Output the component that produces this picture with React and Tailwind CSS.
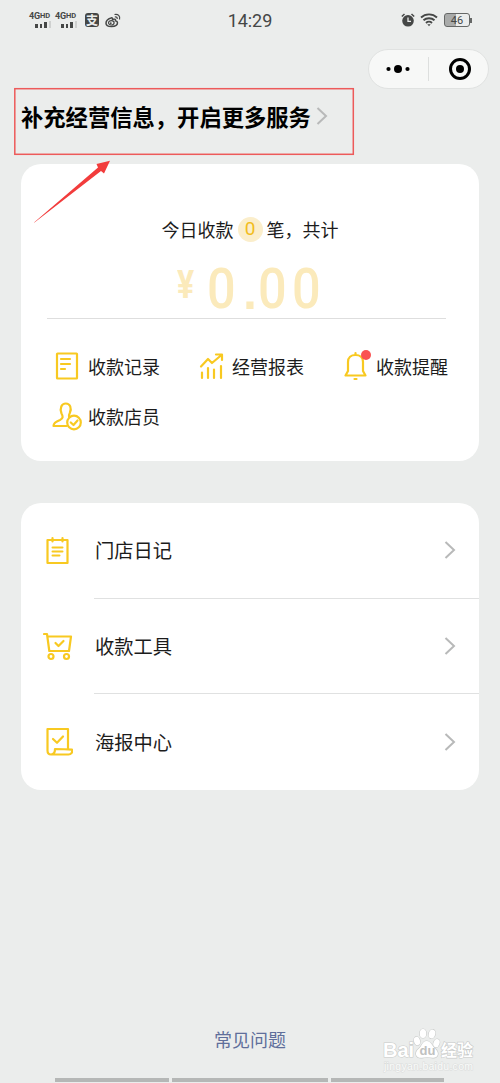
import React from 'react';

const stroke = {
  fill: 'none',
  stroke: '#f8c921',
  strokeWidth: 2.2,
  strokeLinecap: 'round',
  strokeLinejoin: 'round',
};

function RecordIcon() {
  return (
    <svg width="30" height="30" viewBox="0 0 30 30" {...stroke}>
      <rect x="5" y="2.5" width="20" height="25" rx="0.5" />
      <path d="M9 8h9M9 13h9M9 18h4" />
    </svg>
  );
}

function ReportIcon() {
  return (
    <svg width="30" height="30" viewBox="0 0 30 30" {...stroke}>
      <path d="M5 15.500L12 8L16 12L25.500 4M20 3.500H26V9" />
      <path d="M6 21.500V27M12 17V27M18 18.500V27M25 15V27" />
    </svg>
  );
}

function BellIcon() {
  return (
    <svg width="30" height="30" viewBox="0 0 30 30" {...stroke}>
      <path d="M5.500 24.500H25.500L23 20V11C23 6.500 20 4 15.500 4S8 6.500 8 11V20Z" />
      <path d="M15.500 3V2M14.500 28h2" />
    </svg>
  );
}

function StaffIcon() {
  return (
    <svg width="32" height="30" viewBox="0 0 32 30" {...stroke}>
      <path d="M14.500 25H1.500C1.500 22 4 20.500 8 19C11.500 17.500 11 15 9.500 12.500C7.500 7 9.500 2.500 13.800 2.500S20 7 17.800 12C16.800 14 16.500 15 17 16" />
      <circle cx="22" cy="21.500" r="6.800" />
      <path d="M18.800 21.500L21.500 24L25.500 19.500" />
    </svg>
  );
}

function DiaryIcon() {
  return (
    <svg width="30" height="30" viewBox="0 0 30 30" {...stroke}>
      <path d="M4.500 4H24.500V27H4.500Z" />
      <path d="M9.500 2V5.500M19.500 2V5.500" />
      <path d="M9.500 11.500H19.500M9.500 15.500H19.500M9.500 19.500H16.500" strokeWidth="2" />
    </svg>
  );
}

function CartIcon() {
  return (
    <svg width="30" height="30" viewBox="0 0 30 30" {...stroke}>
      <path d="M1 2H4L6.300 19H26L28 4.500H5" />
      <path d="M12.500 11L15.500 14L20.500 9" />
      <circle cx="8" cy="24.500" r="2.500" />
      <circle cx="23.500" cy="24.500" r="2.500" />
    </svg>
  );
}

function PosterIcon() {
  return (
    <svg width="30" height="30" viewBox="0 0 30 30" {...stroke}>
      <path d="M25 21.500V2H4.500V23.500C4.500 26 6 27.500 8 27.500H25.500C28 27.500 29.800 25.500 29 22.700C22 22 18 22 12 22C12 25 11 27.500 8 27.500" />
      <path d="M10 12L14 15.800L20 9.500" />
    </svg>
  );
}

function Chevron({ className }) {
  return (
    <svg className={className} width="12" height="18" viewBox="0 0 12 18" fill="none" stroke="#b8b9b9" strokeWidth="2">
      <path d="M1.500 1L10 9L1.500 17" />
    </svg>
  );
}

function Signal() {
  return (
    <div className="flex w-[22px] flex-col">
      <div className="flex h-[9px] items-start font-bold leading-none">
        <span className="text-[9px] leading-[9px] tracking-[-0.2px]">4G</span>
        <span className="text-[7.500px] leading-[7px]">HD</span>
      </div>
      <div className="ml-[6px] mt-px flex h-[6px] items-end gap-[2px]">
        <i className="h-[4px] w-[2.500px] bg-[#454746]" />
        <i className="h-[4.500px] w-[2.500px] bg-[#454746]" />
        <i className="h-[6px] w-[2.500px] bg-[#454746]" />
        <i className="h-[7px] w-[2.500px] bg-[#cfd1d0]" />
      </div>
    </div>
  );
}

function StatusBar() {
  return (
    <div className="grid h-10 grid-cols-3 items-center font-[Roboto,sans-serif] text-[#454746]">
      <div className="flex items-center pl-[29px]">
        <Signal />
        <div className="w-[4px]" />
        <Signal />
        <div className="ml-[8px] flex size-[14px] items-center justify-center rounded-[3px] bg-[#454746] font-['Noto_Sans_CJK_SC',sans-serif] text-[12px] font-bold leading-none text-[#ebedec]">
          支
        </div>
        <svg className="ml-[6px]" width="16" height="15" viewBox="0 0 16 15" fill="none" stroke="#454746">
          <path d="M6 5C3 6 1 8 1 10.200C1 12.500 3.500 13.500 6.500 13.500C10 13.500 12.500 12 12.500 9.800C12.500 8.500 11.500 8 10.500 7.800C10.800 6 9.500 5.800 7.500 6.500C7.700 5 7.200 4.500 6 5Z" strokeWidth="1.500" />
          <ellipse cx="6.300" cy="9.800" rx="2.800" ry="2.200" strokeWidth="1.200" />
          <circle cx="5.800" cy="10.200" r="0.900" fill="#454746" stroke="none" />
          <path d="M9.500 1.500C13 .7 15.500 3 14.500 6.500M9.800 4C11.500 3.600 12.500 4.500 12.200 6" strokeWidth="1.200" />
        </svg>
      </div>
      <div className="text-center text-[18px] tracking-[-0.1px]">14:29</div>
      <div className="flex items-center justify-end pr-[28px]">
        <svg width="14" height="14" viewBox="0 0 14 14">
          <circle cx="7" cy="7.800" r="5.800" fill="#454746" />
          <path d="M.8 3.500L3.500 1M13.200 3.500L10.500 1" stroke="#454746" strokeWidth="1.500" />
          <path d="M7 4.500V8.300H10" fill="none" stroke="#ebedec" strokeWidth="1.300" />
        </svg>
        <svg className="ml-[5px]" width="18" height="14" viewBox="0 0 18 14" fill="none" stroke="#454746" strokeWidth="1.900">
          <path d="M1 4.500C5.500 .3 12.500 .3 17 4.500M3.500 7.300C6.500 4.500 11.500 4.500 14.500 7.300M6 10C7.700 8.400 10.300 8.400 12 10" />
          <path d="M7.300 11.300H10.700L9 13.200Z" fill="#454746" stroke="none" />
        </svg>
        <div className="ml-[6px] flex h-[14px] w-[26px] items-center justify-center rounded-[3px] border-[1.500px] border-[#666867] bg-linear-to-r from-[#a9abaa] from-46% to-[#ebedec] to-46% text-[11px] leading-none">
          46
        </div>
        <div className="h-[5px] w-[2px] bg-[#666867]" />
      </div>
    </div>
  );
}

function Capsule() {
  return (
    <div className="ml-[368px] mt-[9px] flex h-10 w-[121px] items-center rounded-full border border-[#e0e2e1] bg-[#f7f8f7]">
      <svg className="ml-[16px]" width="26" height="10" viewBox="0 0 26 10">
        <circle cx="3.500" cy="5" r="2.100" />
        <circle cx="13" cy="5" r="4" />
        <circle cx="22.500" cy="5" r="2.100" />
      </svg>
      <div className="ml-[17px] h-6 w-px bg-[#dddfde]" />
      <svg className="ml-[19px]" width="24" height="24" viewBox="0 0 24 24">
        <circle cx="12" cy="12" r="9.500" fill="none" stroke="#000" strokeWidth="3" />
        <circle cx="12" cy="12" r="4" />
      </svg>
    </div>
  );
}

function Shortcut({ icon, label, dot }) {
  return (
    <div className="flex h-[50px] items-center">
      <div className="relative flex w-[36px] items-center">
        {icon}
        {dot && <span className="absolute -top-px left-[21px] size-[10px] rounded-full bg-[#fa5151]" />}
      </div>
      <span className="whitespace-nowrap pb-px text-[18px] leading-6">{label}</span>
    </div>
  );
}

function SummaryCard() {
  return (
    <section className="mx-[21px] mt-[19px] h-[297px] rounded-[20px] bg-white pt-[52px]">
      <div className="flex h-[26px] items-center justify-center text-[18px] leading-[26px]">
        <span>今日收款</span>
        <span className="mx-[4px] flex size-[25px] items-center justify-center rounded-full bg-[#fbeecb] font-[Roboto,sans-serif] text-[19px] text-[#f2bd1d]">0</span>
        <span>笔，共计</span>
      </div>
      <div className="ml-[156px] flex h-[76px] items-start font-[Roboto,sans-serif] font-medium text-[#fbeabb]">
        <span className="mt-[21px] w-[30px] origin-left scale-x-[0.820] text-[39px] font-bold leading-[44px]">¥</span>
        <span className="mt-[15px] w-[36px] origin-left scale-x-[0.900] text-[56px] leading-[64px]">0</span>
        <span className="mt-[18px] w-[15px] font-['Liberation_Sans',sans-serif] text-[50px] font-bold leading-[64px]">.</span>
        <span className="mt-[15px] w-[34px] origin-left scale-x-[0.900] text-[56px] leading-[64px]">0</span>
        <span className="mt-[15px] w-[34px] origin-left scale-x-[0.900] text-[56px] leading-[64px]">0</span>
      </div>
      <div className="ml-[26px] mr-[33px] h-px bg-[#dedede]" />
      <div className="ml-[31px] mt-[22px] grid grid-cols-[144px_144px_110px]">
        <Shortcut icon={<RecordIcon />} label="收款记录" />
        <Shortcut icon={<ReportIcon />} label="经营报表" />
        <Shortcut icon={<BellIcon />} label="收款提醒" dot />
        <Shortcut icon={<StaffIcon />} label="收款店员" />
      </div>
    </section>
  );
}

function MenuRow({ icon, label, last }) {
  return (
    <div className="flex h-[95.700px] items-center pl-[22px]">
      <div className="w-[51px]">{icon}</div>
      <div className={`flex h-full flex-1 items-center justify-between pr-[23px] ${last ? '' : 'border-b-[1.500px] border-[#e0e1e1]'}`}>
        <span className="pl-px pt-px text-[19.3px]">{label}</span>
        <Chevron />
      </div>
    </div>
  );
}

function Watermark() {
  return (
    <div className="absolute left-[382px] top-[1026px] h-[48px] w-[100px]">
      <svg width="100" height="48" viewBox="0 0 100 48" fill="#fff" stroke="#c9cbca" strokeWidth="1.200" paintOrder="stroke">
        <text x="1" y="31" fontSize="20" fontWeight="700" fontFamily="Liberation Sans, sans-serif">Bai</text>
        <ellipse cx="35" cy="15" rx="3" ry="4.200" transform="rotate(-15 35 15)" />
        <ellipse cx="41" cy="7.500" rx="3.200" ry="4.500" />
        <ellipse cx="50" cy="8" rx="3.200" ry="4.500" transform="rotate(15 50 8)" />
        <ellipse cx="54.500" cy="17" rx="3" ry="4.200" transform="rotate(20 54 17)" />
        <path d="M44.500 15C49 15 50 20 53 22.500C58 27 56 32 51 31.800C47 31 43 31 40 31.800C34 32.500 31.500 27 37 22.500C40 20 40.500 15 44.500 15Z" />
        <text x="37.500" y="29" fontSize="13" fontWeight="700" fill="#bfc1c0" stroke="none" fontFamily="Liberation Sans, sans-serif">du</text>
        <text x="59" y="30" fontSize="16" fontWeight="700" fontFamily="Noto Sans CJK SC, sans-serif">经验</text>
        <text x="2" y="44" fontSize="10.500" fill="#fafbfa" stroke="#dcdedd" textLength="89" fontFamily="Liberation Sans, sans-serif">jingyan.baidu.com</text>
      </svg>
    </div>
  );
}

// red frame and arrow drawn over the title
function Highlight() {
  return (
    <svg className="pointer-events-none absolute left-0 top-[80px]" width="370" height="150" viewBox="0 0 370 150">
      <rect x="14.800" y="8.700" width="338.500" height="65.600" fill="none" stroke="#ed5a5a" strokeWidth="1.500" />
      <path d="M34 142.500L98 87.500L96.500 84L110 80.800L104 93.500L101 91L34.500 142.500Z" fill="#f23c3c" />
    </svg>
  );
}

function App() {
  return (
    <div className="relative flex h-[1083px] w-[500px] flex-col overflow-hidden bg-[#ebedec] font-['Noto_Sans_CJK_SC',sans-serif] text-[#1c1c1c]">
      <StatusBar />
      <Capsule />
      <div className="mt-[7px] flex h-[49px] items-start pl-[21px]">
        <h1 className="whitespace-nowrap text-[22.300px] font-bold leading-[40px] text-black">补充经营信息，开启更多服务</h1>
        <Chevron className="ml-[5px] mt-[11px]" />
      </div>
      <SummaryCard />
      <section className="mx-[21px] mt-[42px] h-[287px] shrink-0 rounded-[20px] bg-white">
        <MenuRow icon={<DiaryIcon />} label="门店日记" />
        <MenuRow icon={<CartIcon />} label="收款工具" />
        <MenuRow icon={<PosterIcon />} label="海报中心" last />
      </section>
      <footer className="mt-auto flex flex-col">
        <a className="text-center text-[18px] leading-[26px] text-[#5f6f9b]">常见问题</a>
        <div className="mb-px ml-[55px] mt-[26px] flex h-[4px] gap-[3px]">
          <div className="w-[114px] bg-[#b5b7b6]" />
          <div className="w-[156px] bg-[#b5b7b6]" />
          <div className="w-[113px] bg-[#b5b7b6]" />
        </div>
      </footer>
      <Highlight />
      <Watermark />
    </div>
  );
}

export default App;
